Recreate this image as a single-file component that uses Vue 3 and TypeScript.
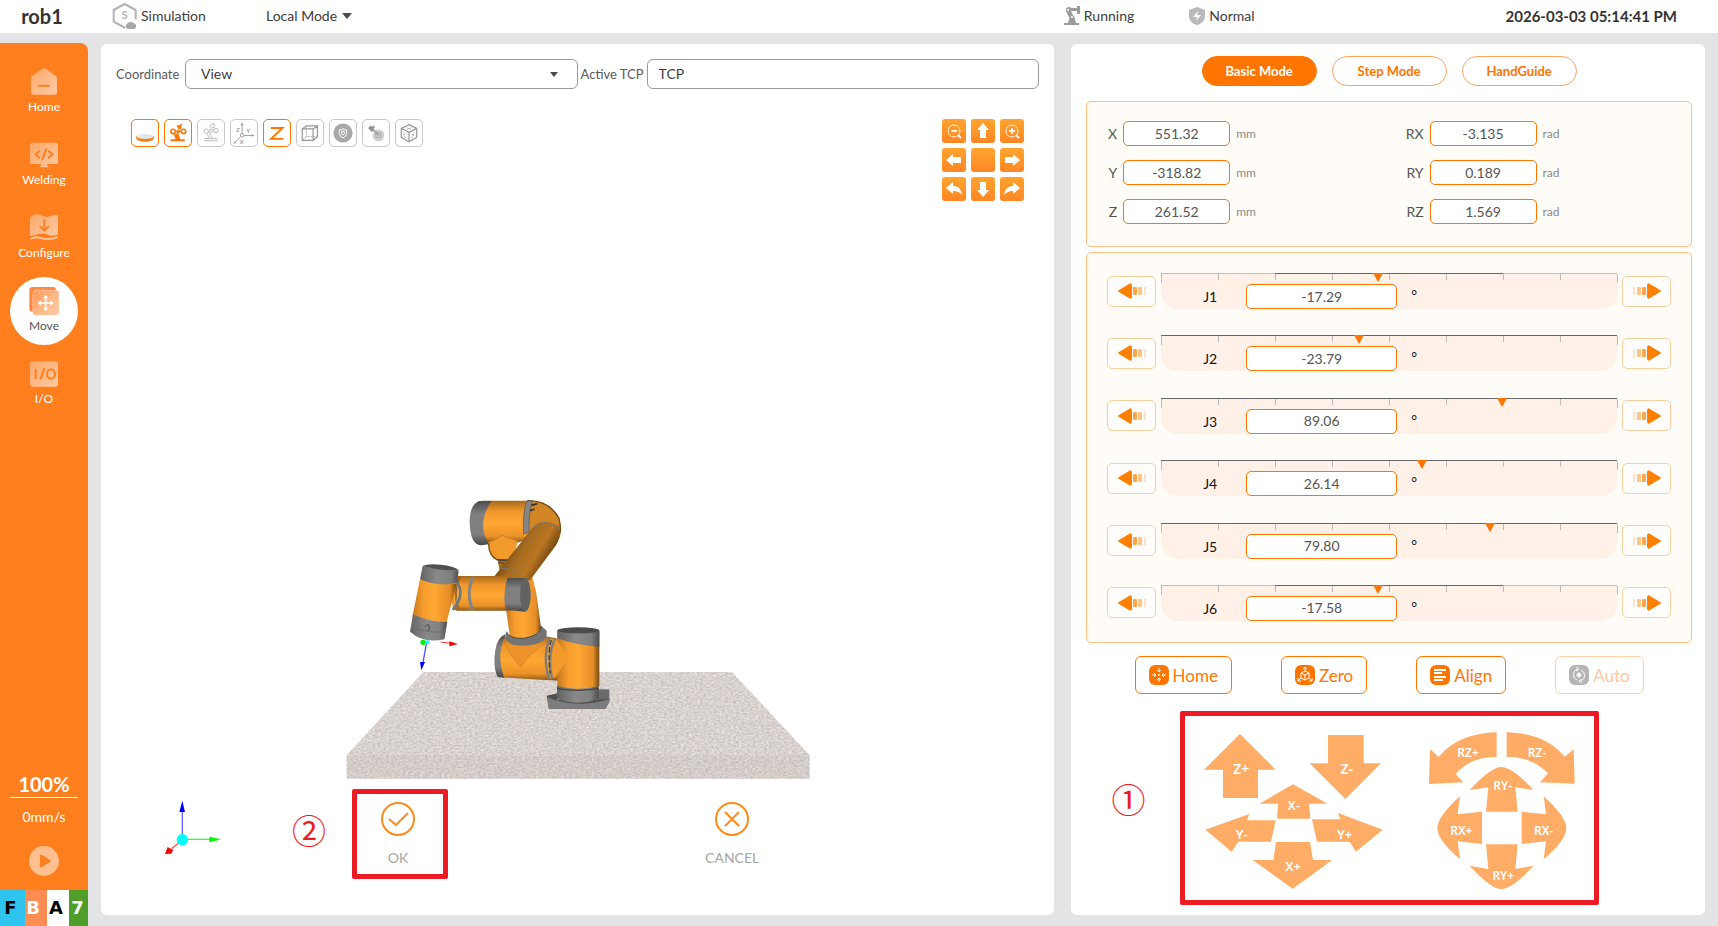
<script setup lang="ts">
import { ref } from 'vue'

interface Joint { name: string; value: string; range: number; inner: boolean }
interface PoseField { label: string; value: string; unit: string }
interface JogKey { label: string; box: [number, number, number, number]; d: string; tx: number; ty: number; size: number }

const coordinate = ref('View')
const tcp = ref('TCP')
const mode = ref('Basic Mode')
const modes = ['Basic Mode', 'Step Mode', 'HandGuide']

const pose: PoseField[] = [
  { label: 'X', value: '551.32', unit: 'mm' },
  { label: 'RX', value: '-3.135', unit: 'rad' },
  { label: 'Y', value: '-318.82', unit: 'mm' },
  { label: 'RY', value: '0.189', unit: 'rad' },
  { label: 'Z', value: '261.52', unit: 'mm' },
  { label: 'RZ', value: '1.569', unit: 'rad' },
]

const joints: Joint[] = [
  { name: 'J1', value: '-17.29', range: 720, inner: true },
  { name: 'J2', value: '-23.79', range: 360, inner: false },
  { name: 'J3', value: '89.06', range: 360, inner: false },
  { name: 'J4', value: '26.14', range: 360, inner: false },
  { name: 'J5', value: '79.80', range: 360, inner: false },
  { name: 'J6', value: '-17.58', range: 720, inner: true },
]
const markerLeft = (j: Joint) => `${50 + (Number(j.value) / j.range) * 100}%`

/* Jog key artwork is drawn at three units per pixel; box is left, top, width, height in pixels. */
const PAD_X = 237
const PAD_Y = 33
const jogKeys: JogKey[] = [
  { label: 'Z+', box: [24, 22, 72, 66], d: 'M417 102L524 209H471V294H366V209H309Z', tx: 421, ty: 223, size: 42 },
  { label: 'Z-', box: [129, 22, 73, 67], d: 'M681 105H788V190H840L733 297L626 190H681Z', tx: 737, ty: 223, size: 42 },
  { label: 'X-', box: [79, 73, 70, 35], d: 'M576 253L680 311H624L628 356H528L531 311H475Z', tx: 578, ty: 330, size: 39 },
  { label: 'Y-', box: [25, 102, 72, 40], d: 'M313 389L445 342L438 361H524L510 425H412L392 455Z', tx: 422, ty: 416, size: 39 },
  { label: 'Y+', box: [131, 101, 73, 41], d: 'M845 389L711 339L718 358H633L648 425H746L765 455Z', tx: 731, ty: 416, size: 39 },
  { label: 'X+', box: [72, 130, 82, 49], d: 'M525 426H627L636 480H694L575 566L455 480H517Z', tx: 576, ty: 512, size: 39 },
  { label: 'RZ+', box: [248, 21, 70, 53], d: 'M1187 97C1110 99 1050 125 1013 171L987 147L984 252L1087 247L1064 222C1090 190 1130 171 1187 171Z', tx: 1101, ty: 170, size: 36 },
  { label: 'RZ-', box: [326, 21, 70, 53], d: 'M1217 97C1295 99 1355 125 1391 171L1418 147L1421 251L1317 247L1341 220C1310 188 1270 171 1217 170Z', tx: 1308, ty: 170, size: 36 },
  { label: 'RY-', box: [289, 55, 66, 47], d: 'M1106 270Q1170 201 1201 201Q1235 201 1297 270L1243 262L1250 335H1155L1162 262Z', tx: 1205, ty: 271, size: 36 },
  { label: 'RX+', box: [257, 85, 46, 64], d: 'M1077 289Q1009 350 1009 385Q1009 420 1077 478L1070 424L1143 432V335L1070 343Z', tx: 1081, ty: 406, size: 36 },
  { label: 'RX-', box: [341, 85, 46, 64], d: 'M1328 289Q1396 350 1396 385Q1396 420 1328 478L1335 424L1262 432V335L1335 343Z', tx: 1328, ty: 404, size: 36 },
  { label: 'RY+', box: [289, 133, 66, 46], d: 'M1106 497Q1170 567 1201 567Q1235 567 1297 497L1243 507L1250 433H1155L1162 507Z', tx: 1207, ty: 541, size: 36 },
]
const keyStyle = (k: JogKey) => ({ left: `${k.box[0]}px`, top: `${k.box[1]}px`, width: `${k.box[2]}px`, height: `${k.box[3]}px` })
const keyView = (k: JogKey) => `${PAD_X + k.box[0] * 3} ${PAD_Y + k.box[1] * 3} ${k.box[2] * 3} ${k.box[3] * 3}`
</script>

<template>
  <div class="page">
    <header class="topbar">
      <h1 class="name">rob1</h1>
      <span class="status sim">
        <svg width="26" height="28" viewBox="338 6 78 84">
          <path d="M378 84L343 65V30L376 12L409 30V58" fill="none" stroke="#b4b4b4" stroke-width="6" stroke-linejoin="round" />
          <text x="376" y="58" text-anchor="middle" font-size="34" font-weight="700" fill="#b4b4b4">S</text>
          <path d="M386 87A9 9 0 0 1 383 71A13 11 0 0 1 404 70A9 9 0 0 1 405 87Z" fill="#a8a8a8" />
        </svg>
        Simulation
      </span>
      <button class="local" type="button">Local Mode <i class="caret"></i></button>
      <div class="right">
        <span class="status">
          <svg width="18" height="20" viewBox="0 0 18 20" fill="#9b9b9b">
            <path d="M1 17h15v2H1zM5 17L7 10h4l2 7zM6 11L3 5a3 3 0 0 1 3-4l3 1h5V0h3v8h-3V5H8l3 6z" />
            <circle cx="9" cy="11" r="1" fill="#fff" /><circle cx="5" cy="4" r="1" fill="#fff" />
          </svg>
          Running
        </span>
        <span class="status normal">
          <svg width="16" height="18" viewBox="0 0 16 18"><path d="M8 0L16 3V9C16 14 12 17 8 18C4 17 0 14 0 9V3Z" fill="#b9b9b9" /><path d="M9 4L4 10H8L7 14L12 8H8Z" fill="#fff" /></svg>
          Normal
        </span>
        <time class="clock">2026-03-03 05:14:41 PM</time>
      </div>
    </header>

    <div class="body">
      <aside class="side">
        <nav class="nav">
          <a href="#home" class="item">
            <svg width="28" height="28" viewBox="0 0 84 84"><defs><linearGradient id="pale" x1="0" y1="0" x2="1" y2="1"><stop offset="0" stop-color="#ffa869" /><stop offset="1" stop-color="#ffcaa3" /></linearGradient></defs><path d="M3 30Q3 26 6 24L36 3Q42-1 48 3L78 24Q81 26 81 30V72Q81 80 73 80H11Q3 80 3 72Z" fill="url(#pale)" /><path d="M26 53H57" stroke="#ff7f1e" stroke-width="6" stroke-linecap="round" /></svg>
            <span>Home</span>
          </a>
          <a href="#welding" class="item">
            <svg width="28" height="28" viewBox="0 0 84 84"><path d="M6 5H78Q84 5 84 11V63Q84 69 78 69H51Q50 75 57 79H27Q34 75 33 69H6Q0 69 0 63V11Q0 5 6 5Z" fill="url(#pale)" /><path d="M28 31L17 40L28 50M56 31L67 40L56 50M48 25L37 55" fill="none" stroke="#ff7f1e" stroke-width="6" stroke-linecap="round" /></svg>
            <span>Welding</span>
          </a>
          <a href="#configure" class="item">
            <svg width="28" height="28" viewBox="0 0 84 84"><path d="M0 10Q16-4 32 4T60 7T84 3V61Q68 68 54 62T26 60T0 66V12Z" fill="url(#pale)" /><path d="M2 75Q14 67 28 71T56 75T82 69" fill="none" stroke="#ffc498" stroke-width="6" /><path d="M43 18V48M31 38L43 50L55 38" fill="none" stroke="#ff7f1e" stroke-width="6" stroke-linecap="round" /></svg>
            <span>Configure</span>
          </a>
          <a href="#move" class="item active" aria-current="page">
            <svg width="30" height="28" viewBox="0 0 90 84"><defs><linearGradient id="tile" x1="0" y1="0" x2="1" y2="1"><stop offset="0" stop-color="#ff9a57" /><stop offset="1" stop-color="#ffd0ae" /></linearGradient></defs><rect x="1" y="0" width="80" height="74" rx="9" fill="#ff8a45" /><rect x="12" y="10" width="77" height="74" rx="9" fill="url(#tile)" stroke="#ffc197" stroke-width="3" /><path d="M50 29V67M31 48H69" stroke="#fff" stroke-width="5" /><path d="M50 24l8 10H42zM50 72l8-10H42zM26 48l10-8v16zM74 48l-10-8v16z" fill="#fff" /></svg>
            <span>Move</span>
          </a>
          <a href="#io" class="item">
            <svg width="28" height="28" viewBox="0 0 84 84"><rect y="4" width="84" height="76" rx="8" fill="url(#pale)" /><path d="M17 27V57M43 25L31 58" stroke="#ff7f1e" stroke-width="6" /><ellipse cx="63" cy="42" rx="12" ry="14" fill="none" stroke="#ff7f1e" stroke-width="6" /></svg>
            <span>I/O</span>
          </a>
        </nav>
        <div class="speed">
          <strong>100%</strong>
          <span>0mm/s</span>
          <button type="button" class="play" aria-label="Play"><svg width="30" height="30" viewBox="0 0 30 30"><circle cx="15" cy="15" r="15" fill="#ffbf8f" /><path d="M11 10Q11 8 13 9L21 14Q23 15 21 16L13 21Q11 22 11 20Z" fill="#ff7f1e" /></svg></button>
        </div>
        <div class="flags"><b class="f">F</b><b class="b">B</b><b class="a">A</b><b class="n">7</b></div>
      </aside>

      <main class="view panel">
        <div class="form">
          <label for="coord">Coordinate</label>
          <span class="pick"><select id="coord" v-model="coordinate"><option>View</option><option>Base</option><option>Tool</option></select></span>
          <label for="tcp" class="second">Active TCP</label>
          <input id="tcp" v-model="tcp" type="text" />
        </div>

        <div class="stage">
          <div class="overlay">
            <div class="tools">
              <button type="button" class="on" aria-label="Plane"><svg viewBox="0 0 84 84"><path d="M13 52V58Q18 70 42 70Q66 70 71 58V52Z" fill="#ff7800" /><ellipse cx="42" cy="53" rx="28" ry="8" fill="#dfe5ec" /></svg></button>
              <button type="button" class="on" aria-label="Robot"><svg viewBox="0 0 84 84" fill="none" stroke="#ff7500" stroke-width="5"><circle cx="26" cy="37" r="7" /><circle cx="60" cy="37" r="7" /><path d="M34 37H51M39 18L48 23L44 29" /><path d="M29 47L42 42L50 62H64V69H18V62H34Z" fill="#ff7500" stroke="none" /><path d="M38 21L55 11L52 29L46 30Z" fill="#ff7500" stroke="none" /><circle cx="43" cy="37" r="3" fill="#ff7500" /></svg></button>
              <button type="button" aria-label="Ghost robot"><svg viewBox="0 0 84 84" fill="none" stroke="#b5b5b5" stroke-width="3"><circle cx="27" cy="36" r="7" /><circle cx="58" cy="34" r="7" /><path d="M34 33L50 30M34 40L50 38M38 24L42 14L52 12V24L40 26M30 45L38 60M38 42L46 60M20 60H64M20 67H64" /></svg></button>
              <button type="button" aria-label="Axes"><svg viewBox="0 0 84 84" fill="none" stroke="#9a9a9a" stroke-width="3"><circle cx="36" cy="49" r="6" /><path d="M36 43V12M42 50H74M31 54L12 74" /><path d="M36 8l5 9H31zM76 50l-9-4v8zM9 77l3-9 5 6z" fill="#9a9a9a" stroke="none" /><g fill="#9a9a9a" stroke="none" font-size="18" font-weight="700"><text x="17" y="38">Z</text><text x="50" y="43">Y</text><text x="28" y="76">X</text></g></svg></button>
              <button type="button" class="on" aria-label="Z up"><svg viewBox="0 0 84 84"><path d="M22 26H60L23 61H62" fill="none" stroke="#ff7500" stroke-width="6" /></svg></button>
              <button type="button" aria-label="Box"><svg viewBox="0 0 84 84" fill="none" stroke="#999" stroke-width="4"><path d="M17 29H52V66H17ZM17 29L30 19H66V54L52 66M52 29L66 19" /><path d="M30 20V53H64M30 53L18 64" stroke-width="3" stroke-dasharray="5 3" /></svg></button>
              <button type="button" aria-label="Safety"><svg viewBox="0 0 84 84"><circle cx="42" cy="42" r="31" fill="#a8a8a8" /><path d="M42 28Q48 32 54 32V44Q53 54 42 58Q31 54 30 44V32Q36 32 42 28Z" fill="none" stroke="#fff" stroke-width="3" /><path d="M38 36H46V46L42 49L38 46Z" fill="none" stroke="#fff" stroke-width="3" /></svg></button>
              <button type="button" aria-label="Tool"><svg viewBox="0 0 84 84"><circle cx="50" cy="50" r="19" fill="#cfcfcf" /><circle cx="49" cy="49" r="9" fill="none" stroke="#a4a4a4" stroke-width="3" /><path d="M16 26L26 18L30 22L36 17L38 24L34 28L37 33L29 39Z" fill="#929292" /><path d="M33 30L50 50" stroke="#929292" stroke-width="4" /></svg></button>
              <button type="button" aria-label="Cube"><svg viewBox="0 0 84 84" fill="none" stroke="#999" stroke-width="4"><path d="M42 15L67 27V56L42 70L17 56V27ZM17 27L42 40L67 27M42 40V68" /><path d="M26 40V54L36 60M33 44L25 50M51 45L59 52M59 40L50 58M34 25L50 31M50 25L34 31" stroke-width="3" stroke-dasharray="3 3" /></svg></button>
            </div>
            <div class="pad9">
              <button type="button" aria-label="Zoom out"><svg viewBox="0 0 24 24" fill="none" stroke="#fff3e0" stroke-width="2"><circle cx="12" cy="12" r="6" stroke-width="1" /><path d="M9 12h6" /><path d="M16 16l3 3" /></svg></button>
              <button type="button" aria-label="Up"><svg viewBox="0 0 24 24" fill="#fff"><path d="M12 4l6 7h-3v8H9v-8H6z" /></svg></button>
              <button type="button" aria-label="Zoom in"><svg viewBox="0 0 24 24" fill="none" stroke="#fff3e0" stroke-width="2"><circle cx="12" cy="12" r="6" stroke-width="1" /><path d="M9 12h6M12 9v6" /><path d="M16 16l3 3" /></svg></button>
              <button type="button" aria-label="Left"><svg viewBox="0 0 24 24" fill="#fff"><path d="M4 12l7-6v3h8v6h-8v3z" /></svg></button>
              <button type="button" aria-label="Reset"></button>
              <button type="button" aria-label="Right"><svg viewBox="0 0 24 24" fill="#fff"><path d="M20 12l-7-6v3H5v6h8v3z" /></svg></button>
              <button type="button" aria-label="Rotate left"><svg viewBox="0 0 24 24" fill="#fff"><path d="M4 11l7-6v4q8 0 9 9q-3-4-9-4v3z" /></svg></button>
              <button type="button" aria-label="Down"><svg viewBox="0 0 24 24" fill="#fff"><path d="M12 20l6-7h-3V5H9v8H6z" /></svg></button>
              <button type="button" aria-label="Rotate right"><svg viewBox="0 0 24 24" fill="#fff"><path d="M20 11l-7-6v4q-8 0-9 9q3-4 9-4v3z" /></svg></button>
            </div>
          </div>

          <svg class="scene" width="500" height="300" viewBox="-8 0 1500 900" role="img" aria-label="Robot arm on table">
            <defs>
              <filter id="grain" x="0" y="0" width="1" height="1" color-interpolation-filters="sRGB"><feTurbulence type="fractalNoise" baseFrequency="0.120 0.200" numOctaves="3" seed="4" result="n" /><feColorMatrix in="n" type="matrix" values="0.250 0 0 0 0.725  0.250 0 0 0 0.700  0.250 0 0 0 0.688  0 0 0 0 1" /><feComposite in2="SourceGraphic" operator="in" /></filter>
              <linearGradient id="vert" x1="0" y1="0" x2="0" y2="1"><stop offset="0" stop-color="#a5681a" /><stop offset=".25" stop-color="#f0962b" /><stop offset=".55" stop-color="#ffa733" /><stop offset=".85" stop-color="#eb9229" /><stop offset="1" stop-color="#875415" /></linearGradient>
              <linearGradient id="horz" x1="0" y1="0" x2="1" y2="0"><stop offset="0" stop-color="#c47a20" /><stop offset=".25" stop-color="#f79c2d" /><stop offset=".5" stop-color="#ffa733" /><stop offset=".85" stop-color="#e58d26" /><stop offset="1" stop-color="#734812" /></linearGradient>
              <linearGradient id="dark" gradientUnits="userSpaceOnUse" x1="540" y1="180" x2="650" y2="245"><stop offset="0" stop-color="#6f4512" /><stop offset=".35" stop-color="#a76b20" /><stop offset=".7" stop-color="#b97622" /><stop offset="1" stop-color="#70450f" /></linearGradient>
              <linearGradient id="steel" x1="0" y1="0" x2="1" y2="0"><stop offset="0" stop-color="#636363" /><stop offset=".45" stop-color="#8a8a8a" /><stop offset=".8" stop-color="#808080" /><stop offset="1" stop-color="#4d4d4d" /></linearGradient>
              <linearGradient id="steelV" x1="0" y1="0" x2="0" y2="1"><stop offset="0" stop-color="#4d4d4d" /><stop offset=".3" stop-color="#808080" /><stop offset=".75" stop-color="#808080" /><stop offset="1" stop-color="#454545" /></linearGradient>
            </defs>
            <path d="M278 576H1204L1437 826V896H48V826Z" fill="#d9d3d0" filter="url(#grain)" />
            <path d="M48 826H1437V896H48Z" fill="#a89c94" opacity=".1" />
            <path d="M800 628H836V660H800Z" fill="#6b6b6b" />
            <path d="M648 647L680 640V660H803L836 655V665L825 686H655Z" fill="#505050" />
            <path d="M648 652Q740 688 836 657V665L825 686H655Z" fill="#7d7d7d" />
            <path d="M679 618H804V658Q740 678 679 658Z" fill="url(#steel)" /><path d="M679 625Q740 637 804 625" fill="none" stroke="#444" stroke-width="4" />
            <path d="M530 465L655 470L690 478V602L645 600L505 592Q490 530 510 480Z" fill="url(#vert)" />
            <path d="M526 462Q500 470 494 510Q486 560 500 590L520 593Q500 535 515 490Z" fill="url(#steelV)" />
            <path d="M640 492Q600 515 572 560Q535 530 525 485Z" fill="#ec942a" /><path d="M525 485Q535 530 572 560Q600 515 640 492" fill="none" stroke="#c98024" stroke-width="2" />
            <path d="M680 452H806V618Q743 634 680 618Z" fill="url(#horz)" />
            <path d="M680 452H806V500Q740 497 680 475Z" fill="url(#steel)" /><ellipse cx="743" cy="451" rx="63" ry="9" fill="#4c4c4c" />
            <path d="M680 482Q700 510 712 535Q692 565 674 592L658 597V475Z" fill="#f29a2c" />
            <path d="M657 474Q635 530 655 598M672 476Q649 530 664 596" fill="none" stroke="#7c7c7c" stroke-width="7" /><path d="M662 480Q650 520 659 580" fill="none" stroke="#3f3f3f" stroke-width="4" stroke-dasharray="16 7" />
            <path d="M525 380L605 290L617 340L632 450Q585 495 538 472Z" fill="url(#horz)" />
            <path d="M527 455Q535 477 580 475Q632 466 632 438L648 452V470Q630 497 575 497Q530 497 524 475Z" fill="#747474" /><path d="M527 455Q535 477 580 475Q632 466 632 438" fill="none" stroke="#4a4a4a" stroke-width="3" />
            <path d="M500 238H540V285H510Z" fill="#a66a1e" />
            <path d="M455 62H600V175L560 188H455Z" fill="url(#vert)" />
            <path d="M472 188L515 166L562 184L545 240H500Q476 228 474 205Z" fill="#f29a2c" /><path d="M474 190Q474 228 498 238L536 240" fill="none" stroke="#76501a" stroke-width="4" /><path d="M474 190L515 166L562 184" fill="none" stroke="#c98024" stroke-width="3" /><path d="M498 240L535 242M503 248L520 250" stroke="#3e3e3e" stroke-width="3" />
            <path d="M483 63H445Q416 75 417 130Q420 195 450 196L475 193Q448 150 462 105Q470 80 483 63Z" fill="url(#steelV)" />
            <path d="M590 62Q655 60 685 115Q692 145 688 175L655 160L590 150Z" fill="#d28525" /><path d="M590 62Q655 60 685 115Q692 145 688 160" fill="none" stroke="#70480f" stroke-width="4" />
            <path d="M590 62Q574 100 579 162L596 156Q592 100 606 63Z" fill="#858585" stroke="#555" stroke-width="2" /><path d="M602 76l18-5M598 92l14-5" stroke="#333" stroke-width="5" />
            <path d="M490 290L603 146Q640 108 686 140Q692 170 676 196L597 302Z" fill="url(#dark)" /><path d="M605 143Q640 108 688 150" fill="none" stroke="#777" stroke-width="3" /><path d="M512 265Q545 262 572 288" fill="none" stroke="#777" stroke-width="3" />
            <path d="M370 288H540V392H385Q350 400 370 288Z" fill="url(#vert)" />
            <path d="M388 290Q365 340 384 386" fill="none" stroke="#8f5b19" stroke-width="5" /><path d="M433 290Q407 340 432 389L420 389Q402 340 421 291Z" fill="#838383" />
            <path d="M374 300Q408 340 366 390" fill="none" stroke="#777" stroke-width="8" /><path d="M372 305Q397 340 364 384" fill="none" stroke="#b8b8b8" stroke-width="2" />
            <path d="M530 294H584Q600 310 600 344Q600 380 584 395L525 389Q515 340 530 294Z" fill="url(#steelV)" /><ellipse cx="584" cy="344" rx="16" ry="50" fill="#626262" />
            <path d="M268 298L378 312L347 430L245 410Z" fill="url(#horz)" />
            <path d="M276 258Q328 270 384 271L380 308Q322 322 268 298Z" fill="url(#steel)" /><path d="M276 258Q290 250 330 254Q370 258 384 270Q330 274 276 258Z" fill="#505050" />
            <path d="M247 403Q295 426 350 426L341 478Q280 492 238 455Z" fill="url(#steel)" /><path d="M242 440Q290 460 344 456" fill="none" stroke="#666" stroke-width="2" /><path d="M282 440Q297 425 296 448L289 452" fill="none" stroke="#444" stroke-width="3" />
            <path d="M330 486L360 490" stroke="#f33" stroke-width="3" /><path d="M356 484L382 492L356 499Z" fill="red" /><path d="M287 492L277 548" stroke="#4d4dff" stroke-width="4" /><path d="M268 546H283L272 571Z" fill="#00f" /><circle cx="277" cy="487" r="8" fill="#0e0" /><circle cx="290" cy="487" r="6" fill="cyan" />
          </svg>
        </div>

        <div class="confirm">
          <svg class="triad" width="58" height="54" viewBox="492 180 174 162"><path d="M547 298V212" stroke="#6666ff" stroke-width="4" /><path d="M547 182L555 216H538Z" fill="#00f" /><path d="M560 298H630" stroke="#3f3" stroke-width="4" /><path d="M664 298L628 290V307Z" fill="#0f0" /><path d="M540 305L515 326" stroke="#f55" stroke-width="4" /><path d="M495 342L503 321L519 330L514 341Z" fill="red" /><circle cx="547" cy="299" r="17" fill="cyan" /></svg>
          <div class="choice">
            <span class="mark two">②</span>
            <button type="button"><svg width="36" height="36" viewBox="0 0 36 36" fill="none" stroke="#ff8a1c" stroke-width="2"><circle cx="18" cy="18" r="16" /><path d="M9 18L16 24L28 12" /></svg><span>OK</span></button>
            <i class="frame ok"></i>
          </div>
          <div class="choice">
            <button type="button"><svg width="36" height="36" viewBox="0 0 36 36" fill="none" stroke="#ff8a1c" stroke-width="2"><circle cx="18" cy="18" r="16" /><path d="M11 11L25 25M25 11L11 25" /></svg><span>CANCEL</span></button>
          </div>
        </div>
      </main>

      <section class="control panel">
        <div class="modes">
          <button v-for="m in modes" :key="m" type="button" :class="{ sel: m === mode }" @click="mode = m">{{ m }}</button>
        </div>

        <div class="card pose">
          <div v-for="p in pose" :key="p.label" class="field">
            <label :for="'pose-' + p.label">{{ p.label }}</label>
            <input :id="'pose-' + p.label" v-model="p.value" type="text" />
            <span>{{ p.unit }}</span>
          </div>
        </div>

        <div class="card joints">
          <div v-for="j in joints" :key="j.name" class="joint">
            <button type="button" class="nudge" :aria-label="j.name + ' minus'">
              <svg width="28" height="16" viewBox="0 0 28 16" fill="#ff7f00"><path d="M1 7L11 1Q14-1 14 3V13Q14 17 11 15L1 9Q-1 8 1 7Z" /><rect x="15" y="4" width="4" height="8" rx="1" opacity=".7" /><rect x="20" y="4" width="4" height="8" rx="1" opacity=".45" /><rect x="26" y="4" width="2" height="8" opacity=".22" /></svg>
            </button>
            <div class="track">
              <i class="limit" :class="{ inner: j.inner }"></i>
              <i v-for="n in 9" :key="n" class="tick" :class="{ end: n === 1 || n === 9 }" :style="{ left: (n - 1) * 12.5 + '%' }"></i>
              <i class="pointer" :style="{ left: markerLeft(j) }"></i>
              <label :for="'joint-' + j.name">{{ j.name }}</label>
              <input :id="'joint-' + j.name" v-model="j.value" type="text" />
              <span class="deg">°</span>
            </div>
            <button type="button" class="nudge" :aria-label="j.name + ' plus'">
              <svg width="28" height="16" viewBox="0 0 28 16" fill="#ff7f00"><path d="M27 7L17 1Q14-1 14 3V13Q14 17 17 15L27 9Q29 8 27 7Z" /><rect x="9" y="4" width="4" height="8" rx="1" opacity=".7" /><rect x="4" y="4" width="4" height="8" rx="1" opacity=".45" /><rect x="0" y="4" width="2" height="8" opacity=".22" /></svg>
            </button>
          </div>
        </div>

        <div class="actions">
          <button type="button"><svg width="20" height="20" viewBox="0 0 20 20"><rect width="20" height="20" rx="6" fill="#ff7500" /><path d="M10 3v4M8 5l2 2 2-2M10 17v-4M8 15l2-2 2 2M3 10h4M5 8l2 2-2 2M17 10h-4M15 8l-2 2 2 2" fill="none" stroke="#fff" /><circle cx="10" cy="10" r="1" fill="#fff" /></svg>Home</button>
          <button type="button"><svg width="20" height="20" viewBox="0 0 20 20"><rect width="20" height="20" rx="6" fill="#ff7500" /><path d="M10 6l4 2v5l-4 2-4-2V8zM6 8l4 2 4-2M10 10v5M10 2v4M8 4l2-2 2 2M6 13l-3 3M3 13v3h3M14 13l3 3M17 13v3h-3" fill="none" stroke="#fff" /></svg>Zero</button>
          <button type="button"><svg width="20" height="20" viewBox="0 0 20 20"><rect width="20" height="20" rx="6" fill="#ff7500" /><path d="M4 5h12M4 8h8M4 12h12M4 15h9" stroke="#fff" stroke-width="2" /></svg>Align</button>
          <button type="button" disabled><svg width="20" height="20" viewBox="0 0 20 20"><rect width="20" height="20" rx="6" fill="#b5b5b5" /><path d="M8 4A6 6 0 0 0 8 15M12 5A6 6 0 0 1 12 16M7 2l3 2-3 2M13 14l-3 2 3 2" fill="none" stroke="#fff" stroke-width="1" /><path d="M10 7l3 3-3 3-3-3z" fill="#fff" /></svg>Auto</button>
        </div>

        <div class="jog">
          <button v-for="k in jogKeys" :key="k.label" type="button" class="key" :style="keyStyle(k)">
            <svg :viewBox="keyView(k)" width="100%" height="100%"><path :d="k.d" fill="#ffad66" /><text :x="k.tx" :y="k.ty" :font-size="k.size" text-anchor="middle">{{ k.label }}</text></svg>
          </button>
          <i class="frame all"></i>
          <span class="mark one">①</span>
        </div>
      </section>
    </div>
  </div>
</template>

<style>
body { margin: 0; }
</style>

<style scoped>
* { box-sizing: border-box; }
.page { display: flex; flex-direction: column; min-height: 100vh; background: #e3e4e6; font-family: Lato, "Open Sans", sans-serif; font-size: 14px; color: #3c3c3c; }
button, input, select { font: inherit; color: inherit; margin: 0; }
button { padding: 0; border: 0; background: none; cursor: pointer; }
svg { display: block; }
.topbar { display: flex; align-items: center; height: 33px; padding-bottom: 2px; background: #fff; line-height: 20px; }
.name { width: 84px; margin: 0; text-align: center; font-size: 20px; font-weight: 700; color: #333; }
.status { display: flex; align-items: center; gap: 3px; }
.sim { width: 182px; padding-left: 28px; }
.local { display: flex; align-items: center; gap: 5px; }
.caret { border: 5px solid transparent; border-top: 6px solid #4a4a4a; border-bottom: 0; }
.right { display: flex; align-items: center; margin-left: auto; padding-right: 41px; }
.normal { margin-left: 55px; gap: 4px; }
.clock { margin-left: 251px; font-size: 15px; font-weight: 700; color: #333; }

.body { display: grid; grid-template-columns: auto minmax(0, 3fr) minmax(0, 2fr); flex: 1; }
.side { display: flex; flex-direction: column; width: 88px; margin-top: 10px; margin-right: 13px; background: #ff7f1e; border-radius: 0 8px 0 0; }
.nav { display: flex; flex-direction: column; align-items: center; gap: 5px; padding-top: 15px; }
.item { display: flex; flex-direction: column; align-items: center; gap: 3px; width: 68px; height: 68px; padding-top: 10px; border-radius: 50%; font-size: 12px; line-height: 16px; color: #fff; text-decoration: none; }
.active { background: #fff; color: #555; }
.speed { display: flex; flex-direction: column; align-items: center; margin-top: auto; padding-bottom: 14px; color: #fff; }
.speed strong { width: 68px; border-bottom: 1px solid #fff; font-size: 20px; line-height: 26px; text-align: center; }
.speed span { margin: 9px 0 19px; line-height: 20px; }
.flags { display: grid; grid-template-columns: 25fr 22fr 22fr 19fr; height: 36px; font-family: "DejaVu Sans", sans-serif; font-size: 18px; line-height: 35px; }
.flags b { text-align: center; color: #fff; }
.flags .f { padding-right: 4px; background: #2ec4ee; color: #000; }
.flags .b { padding-right: 6px; background: #ff8c52; }
.flags .a { padding-right: 4px; background: #fff; color: #000; }
.flags .n { padding-right: 2px; background: #4f9e2a; }

.panel { display: flex; flex-direction: column; margin: 11px 0; background: #fff; border-radius: 6px; }
.view { margin-right: 17px; }
.control { margin-right: 13px; padding: 12px 13px 10px 15px; }
.form { display: grid; grid-template-columns: 69px minmax(0, 1fr) 69px minmax(0, 1fr); align-items: center; padding: 15px 15px 0; color: #5a5a5a; white-space: nowrap; }
.form label { padding-bottom: 1px; font-size: 13px; }
.form .second { padding-left: 3px; }
.pick { position: relative; display: flex; }
.pick::after { content: ""; position: absolute; right: 20px; top: 13px; border: 4px solid transparent; border-top: 5px solid #4a4a4a; border-bottom: 0; pointer-events: none; }
.pick select, .form input { width: 100%; height: 30px; padding: 0 16px 1px; border: 1px solid #999; border-radius: 6px; background: #fff; color: #3c3c3c; appearance: none; }
.pick select { padding: 0 15px 1px; }
.form input { padding: 0 11px 1px; }
.stage { display: flex; flex: 1; flex-direction: column; justify-content: space-between; align-items: center; padding-top: 30px; }
.overlay { display: flex; justify-content: space-between; align-items: flex-start; align-self: stretch; padding: 0 30px; }
.tools { display: flex; gap: 5px; }
.tools button { width: 28px; height: 28px; border: 1px solid #c8c8c8; border-radius: 5px; }
.tools .on { border-color: #ff7500; }
.pad9 { display: grid; grid-template-columns: repeat(3, 24px); grid-auto-rows: 24px; gap: 5px; }
.pad9 button { border-radius: 3px; background: linear-gradient(#ffa42e, #ff8624); }
.confirm { position: relative; display: flex; height: 135px; padding: 21px 155px 0 130px; }
.triad { position: absolute; left: 63px; top: 20px; }
.choice { position: relative; display: flex; flex: 1 1 0; justify-content: center; align-items: flex-start; }
.choice button { display: flex; flex-direction: column; align-items: center; gap: 11px; width: 72px; line-height: 20px; color: #a5a5a5; }
.frame { position: absolute; border: 5px solid #ed1c24; border-radius: 2px; pointer-events: none; }
.ok { left: calc(50% - 46px); top: -12px; width: 96px; height: 90px; }
.mark { position: absolute; font-family: "Noto Sans CJK SC", sans-serif; font-size: 34px; line-height: 34px; color: #ed1c24; }
.two { left: calc(50% - 106px); top: 12px; }

.modes { display: flex; justify-content: center; gap: 15px; margin-bottom: 15px; }
.modes button { width: 115px; height: 30px; padding-bottom: 1px; border: 1px solid #ffa55c; border-radius: 15px; font-size: 13px; font-weight: 700; color: #ff7500; }
.modes .sel { border-color: #ff7500; background: #ff7500; color: #fff; }
.card { border: 1px solid #ffbf80; border-radius: 5px; background: #fffcf8; }
.card input { height: 25px; padding: 0 0 1px; border: 1px solid #ff7500; border-radius: 5px; background: #fff; text-align: center; color: #555; }
.pose { display: grid; grid-template-columns: 1fr 1fr; gap: 14px 9px; padding: 19px 0 22px; margin-bottom: 5px; }
.field { display: flex; align-items: center; gap: 6px; color: #555; }
.field label { width: 30px; text-align: right; }
.field input { width: 107px; }
.field span { font-size: 12px; color: #8a8a8a; }
.joints { display: flex; flex: 1; flex-direction: column; justify-content: space-between; gap: 10px; padding: 20px 20px 21px; }
.joint { display: flex; align-items: center; gap: 5px; }
.nudge { display: grid; place-items: center; width: 49px; height: 31px; border: 1px solid #f5d0a0; border-radius: 5px; background: #fffdfb; }
.track { position: relative; display: flex; flex: 1; align-items: flex-end; height: 36px; border-top: 1px solid #bbb; border-radius: 0 0 16px 16px; background: #fff1e8; }
.limit { position: absolute; left: 0; right: 0; top: -1px; height: 1px; background: #666; }
.inner { left: 25%; right: 25%; }
.tick { position: absolute; top: 0; width: 1px; height: 6px; background: #bbb; }
.end { height: 9px; }
.pointer { position: absolute; top: -1px; margin-left: -5px; border: 5px solid transparent; border-top: 9px solid #ff7500; border-bottom: 0; }
.track label { width: 85px; padding-left: 13px; text-align: center; line-height: 25px; color: #111; }
.track input { width: 151px; }
.deg { margin-left: 14px; line-height: 29px; color: #111; }
.actions { display: flex; justify-content: center; gap: 49px; margin: 13px 0 17px; }
.actions button { display: flex; align-items: center; gap: 4px; height: 38px; padding: 0 13px; border: 1px solid #ff7500; border-radius: 6px; font-size: 17px; color: #ff7500; }
.actions button:disabled { border-color: #ffd0a8; color: #ffc89a; }
.jog { position: relative; align-self: center; width: 419px; height: 194px; }
.key { position: absolute; pointer-events: none; }
.key path { pointer-events: auto; }
.key text { font-family: "Noto Sans", sans-serif; font-weight: 600; fill: #fff; }
.all { inset: 0; }
.one { right: 453px; top: 71px; }
</style>
